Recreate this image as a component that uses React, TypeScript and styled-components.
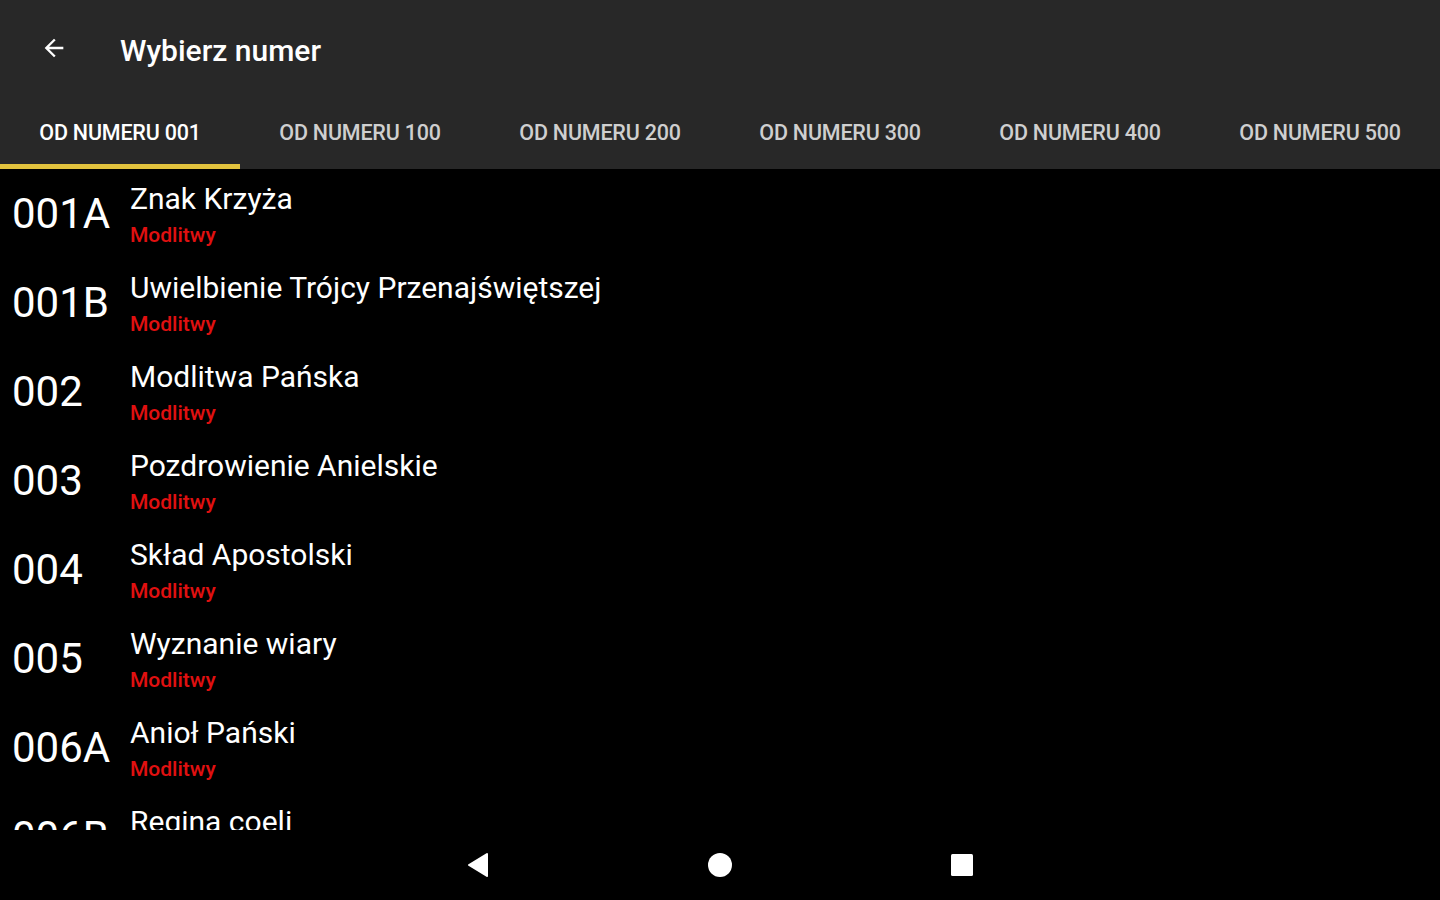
import React from "react";
import styled, { createGlobalStyle } from "styled-components";

const Global = createGlobalStyle`
  html, body { margin: 0; padding: 0; background: #000; }
  body { font-family: Roboto, "Noto Sans", sans-serif; }
`;

const Screen = styled.div`
  width: 1440px;
  height: 900px;
  display: flex;
  flex-direction: column;
  background: #000;
  overflow: hidden;
`;

const AppBar = styled.header`
  background: #282828;
  display: flex;
  flex-direction: column;
  flex: none;
`;

const Toolbar = styled.div`
  height: 96px;
  display: flex;
  align-items: center;
  padding-left: 40px;
  gap: 52px;
`;

const Title = styled.h1`
  margin: 0;
  font-family: Roboto, sans-serif;
  font-weight: 500;
  font-size: 30px;
  color: #fff;
  position: relative;
  top: 2px;
`;

const Tabs = styled.nav`
  height: 73px;
  display: grid;
  grid-template-columns: repeat(6, 1fr);
`;

const Tab = styled.div<{ $active?: boolean }>`
  display: flex;
  align-items: center;
  justify-content: center;
  padding-top: 4px;
  font-family: Roboto, sans-serif;
  font-weight: 500;
  font-size: 21.5px;
  letter-spacing: -0.2px;
  text-transform: uppercase;
  color: ${(p) => (p.$active ? "#ffffff" : "#cfcfcf")};
  border-bottom: 5px solid ${(p) => (p.$active ? "#e2c23e" : "transparent")};
  box-sizing: border-box;
`;

const List = styled.div`
  overflow: hidden;
  flex: 0 0 661px;
`;

const Row = styled.div`
  height: 89px;
  display: flex;
  align-items: center;
`;

const Num = styled.div`
  width: 130px;
  padding-left: 12px;
  box-sizing: border-box;
  font-family: Roboto, sans-serif;
  font-size: 42px;
  color: #fff;
  flex: none;
`;

const Texts = styled.div`
  display: flex;
  flex-direction: column;
  position: relative;
  top: 1px;
`;

const ItemTitle = styled.div`
  font-family: Roboto, sans-serif;
  font-size: 30px;
  color: #fff;
  line-height: 34px;
`;

const ItemSub = styled.div`
  font-family: Roboto, sans-serif;
  font-weight: 500;
  font-size: 21px;
  color: #e01010;
  line-height: 26px;
  margin-top: 6px;
`;

const NavBar = styled.div`
  flex: none;
  height: 70px;
  display: flex;
  align-items: center;
  justify-content: center;
  background: #000;
`;

const NavBtn = styled.div`
  width: 242px;
  display: flex;
  justify-content: center;
  align-items: center;
`;

const tabs = ["Od numeru 001", "Od numeru 100", "Od numeru 200", "Od numeru 300", "Od numeru 400", "Od numeru 500"];

const items: [string, string][] = [
  ["001A", "Znak Krzyża"],
  ["001B", "Uwielbienie Trójcy Przenajświętszej"],
  ["002", "Modlitwa Pańska"],
  ["003", "Pozdrowienie Anielskie"],
  ["004", "Skład Apostolski"],
  ["005", "Wyznanie wiary"],
  ["006A", "Anioł Pański"],
  ["006B", "Regina coeli"],
];

export default function App() {
  return (
    <>
      <Global />
      <Screen>
        <AppBar>
          <Toolbar>
            <svg width="28" height="28" viewBox="0 0 24 24">
              <path d="M20 11H7.83l5.59-5.59L12 4l-8 8 8 8 1.41-1.41L7.83 13H20v-2z" fill="#fff" />
            </svg>
            <Title>Wybierz numer</Title>
          </Toolbar>
          <Tabs>
            {tabs.map((t, i) => (
              <Tab key={t} $active={i === 0}>{t}</Tab>
            ))}
          </Tabs>
        </AppBar>
        <List>
          {items.map(([n, t]) => (
            <Row key={n}>
              <Num>{n}</Num>
              <Texts>
                <ItemTitle>{t}</ItemTitle>
                <ItemSub>Modlitwy</ItemSub>
              </Texts>
            </Row>
          ))}
        </List>
        <NavBar>
          <NavBtn>
            <svg width="26" height="28" viewBox="0 0 26 28">
              <path d="M22 3 L4 14 L22 25 Z" fill="#fff" stroke="#fff" strokeWidth="2" strokeLinejoin="round" />
            </svg>
          </NavBtn>
          <NavBtn>
            <svg width="26" height="26" viewBox="0 0 26 26">
              <circle cx="13" cy="13" r="12" fill="#fff" />
            </svg>
          </NavBtn>
          <NavBtn>
            <svg width="24" height="24" viewBox="0 0 24 24">
              <rect x="1" y="1" width="22" height="22" rx="1.5" fill="#fff" />
            </svg>
          </NavBtn>
        </NavBar>
      </Screen>
    </>
  );
}
